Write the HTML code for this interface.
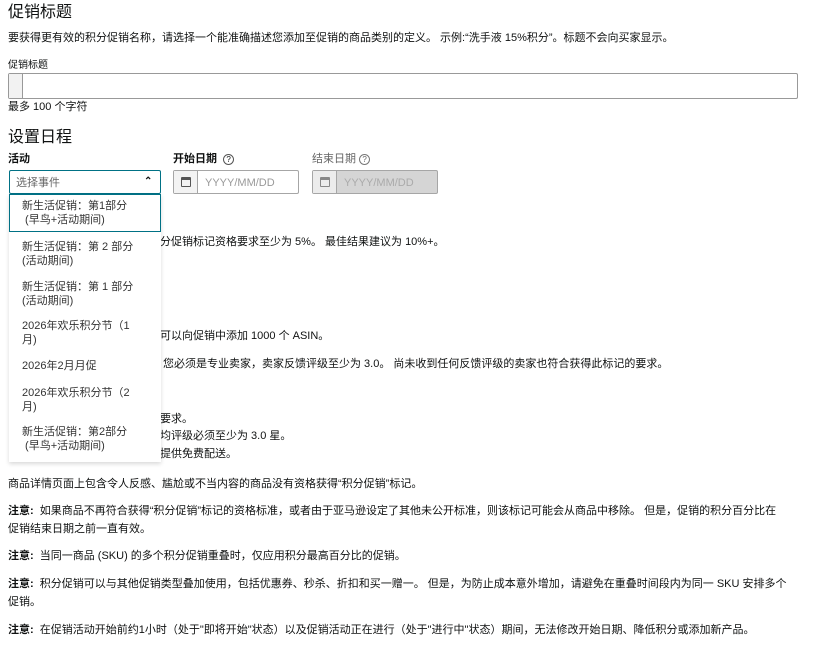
<!DOCTYPE html>
<html><head><meta charset="utf-8"><style>
*{margin:0;padding:0;box-sizing:border-box}
body{width:830px;height:652px;background:#fff;position:relative;overflow:hidden;font-family:"Liberation Sans","Noto Sans CJK SC",sans-serif;color:#0f1111;font-size:11px}
.a{position:absolute;white-space:nowrap;line-height:14px}
.h{font-size:16px;line-height:20px}
b{font-weight:bold;margin-right:3px}
.box{position:absolute;border:1px solid #a6a6a6;border-radius:2px}
.dd{position:absolute;left:9px;top:194px;width:152px;height:268px;background:#fff;box-shadow:0 2px 4px rgba(0,0,0,.15)}
.it{position:absolute;left:13px;line-height:14px;font-size:11px;color:#333;white-space:nowrap}
.cal{position:absolute;width:10px;height:10px;border:1.5px solid #555;border-top-width:3px;border-radius:1px}
</style></head><body>
<div class="a h" style="left:8px;top:3px">促销标题</div>
<div class="a" style="left:8px;top:31px">要获得更有效的积分促销名称，请选择一个能准确描述您添加至促销的商品类别的定义。 示例:“洗手液 15%积分”。标题不会向买家显示。</div>
<div class="a" style="left:8px;top:59px;font-size:10px">促销标题</div>
<div class="box" style="left:8px;top:73px;width:790px;height:26px;border-color:#999"><div style="position:absolute;left:0;top:0;width:14px;height:24px;background:#f2f2f2;border-right:1px solid #999"></div></div>
<div class="a" style="left:8px;top:100px">最多 100 个字符</div>
<div class="a h" style="left:8px;top:128px">设置日程</div>
<div class="a" style="left:8px;top:152px"><b>活动</b></div>
<div class="a" style="left:173px;top:152px"><b>开始日期</b> <span style="border:1px solid #555;border-radius:50%;display:inline-block;width:11px;height:11px;line-height:10px;text-align:center;font-size:8px">?</span></div>
<div class="a" style="left:312px;top:152px;color:#666">结束日期 <span style="border:1px solid #777;border-radius:50%;display:inline-block;width:11px;height:11px;line-height:10px;text-align:center;font-size:8px">?</span></div>
<div class="box" style="left:9px;top:170px;width:152px;height:24px;border-color:#007185"><span class="a" style="left:6px;top:5px;color:#666">选择事件</span><span class="a" style="left:134px;top:4px;font-weight:bold;font-size:10px">&#8963;</span></div>
<div class="box" style="left:173px;top:170px;width:126px;height:24px"><div style="position:absolute;left:0;top:0;width:24px;height:22px;background:#f3f3f3;border-right:1px solid #a6a6a6"></div><div class="cal" style="left:7px;top:6px"></div><span class="a" style="left:31px;top:5px;color:#999">YYYY/MM/DD</span></div>
<div class="box" style="left:312px;top:170px;width:126px;height:24px;background:#d5d5d5"><div style="position:absolute;left:0;top:0;width:24px;height:22px;background:#ececec;border-right:1px solid #a6a6a6"></div><div class="cal" style="left:7px;top:6px;border-color:#888"></div><span class="a" style="left:31px;top:5px;color:#aaa">YYYY/MM/DD</span></div>

<div class="a" style="left:160px;top:235px">分促销标记资格要求至少为 5%。 最佳结果建议为 10%+。</div>
<div class="a" style="left:160px;top:329px">可以向促销中添加 1000 个 ASIN。</div>
<div class="a" style="left:163px;top:357px">您必须是专业卖家，卖家反馈评级至少为 3.0。 尚未收到任何反馈评级的卖家也符合获得此标记的要求。</div>
<div class="a" style="left:160px;top:412px">要求。</div>
<div class="a" style="left:160px;top:429px">均评级必须至少为 3.0 星。</div>
<div class="a" style="left:160px;top:447px">提供免费配送。</div>

<div class="dd">
<div style="position:absolute;left:0;top:0;width:152px;height:38px;border:1.5px solid #007185"></div>
<div class="it" style="top:5px">新生活促销：第1部分<br>&nbsp;(早鸟+活动期间)</div>
<div class="it" style="top:46px">新生活促销：第 2 部分<br>(活动期间)</div>
<div class="it" style="top:86px">新生活促销：第 1 部分<br>(活动期间)</div>
<div class="it" style="top:125px">2026年欢乐积分节（1<br>月)</div>
<div class="it" style="top:165px">2026年2月月促</div>
<div class="it" style="top:192px">2026年欢乐积分节（2<br>月)</div>
<div class="it" style="top:231px">新生活促销：第2部分<br>&nbsp;(早鸟+活动期间)</div>
</div>

<div class="a" style="left:8px;top:477px">商品详情页面上包含令人反感、尴尬或不当内容的商品没有资格获得“积分促销”标记。</div>
<div class="a" style="left:8px;top:502px;line-height:18px"><b>注意:</b> 如果商品不再符合获得“积分促销”标记的资格标准，或者由于亚马逊设定了其他未公开标准，则该标记可能会从商品中移除。 但是，促销的积分百分比在<br>促销结束日期之前一直有效。</div>
<div class="a" style="left:8px;top:549px"><b>注意:</b> 当同一商品 (SKU) 的多个积分促销重叠时，仅应用积分最高百分比的促销。</div>
<div class="a" style="left:8px;top:575px;line-height:18px"><b>注意:</b> 积分促销可以与其他促销类型叠加使用，包括优惠券、秒杀、折扣和买一赠一。 但是，为防止成本意外增加，请避免在重叠时间段内为同一 SKU 安排多个<br>促销。</div>
<div class="a" style="left:8px;top:623px"><b>注意:</b> 在促销活动开始前约1小时（处于"即将开始"状态）以及促销活动正在进行（处于"进行中"状态）期间，无法修改开始日期、降低积分或添加新产品。</div>
</body></html>
